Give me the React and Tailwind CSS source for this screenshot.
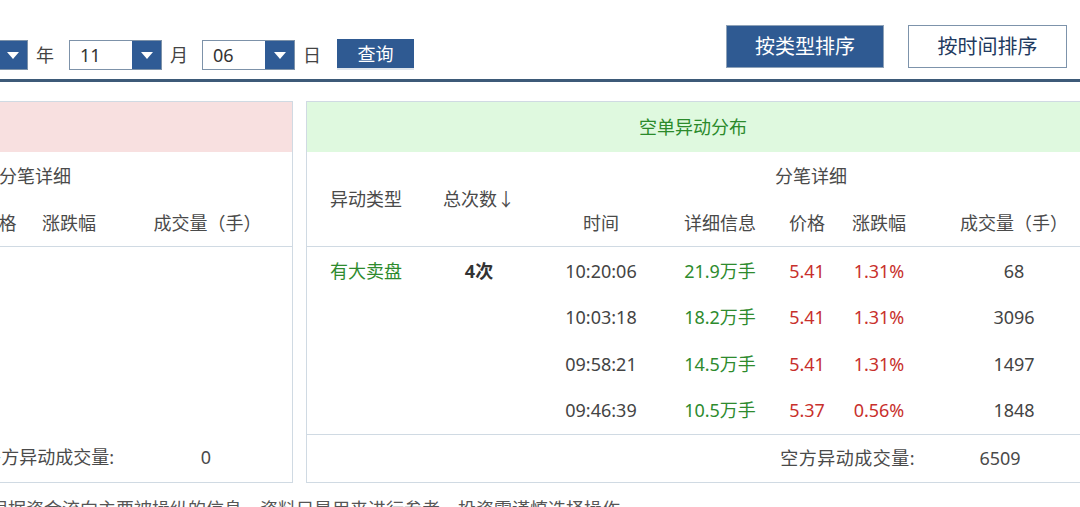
import React from "react";

function Arrow() {
  return (
    <svg width="14" height="9" viewBox="0 0 14 9">
      <polygon points="1,1 13,1 7,8" fill="#ffffff" />
    </svg>
  );
}

function Select({ value, className = "" }) {
  return (
    <div className={`flex h-[30px] border border-[#7d92a9] ${className}`}>
      <div className="w-[62px] bg-white pl-[10px] flex items-center text-[18px] text-[#333] leading-none">{value}</div>
      <div className="w-[29px] bg-[#2f5b95] flex items-center justify-center">
        <Arrow />
      </div>
    </div>
  );
}

const rightCols = "grid grid-cols-[118px_108px_136px_102px_72px_72px_198px]";
const leftCols = "grid grid-cols-[118px_108px_136px_102px_73px_72px_187px]";

const rows = [
  ["10:20:06", "21.9万手", "5.41", "1.31%", "68"],
  ["10:03:18", "18.2万手", "5.41", "1.31%", "3096"],
  ["09:58:21", "14.5万手", "5.41", "1.31%", "1497"],
  ["09:46:39", "10.5万手", "5.37", "0.56%", "1848"],
];

export default function App() {
  return (
    <div className="w-[1080px] h-[507px] overflow-hidden bg-white font-['Noto_Sans','Noto_Sans_CJK_SC',sans-serif] text-[#4a4a4a]">
      {/* top bar */}
      <div className="h-[79px] flex items-start">
        <div className="flex items-center mt-[40px] ml-[-65px] text-[18px] text-[#444]">
          <Select value="2023" />
          <span className="ml-[8px] mr-[15px] leading-none">年</span>
          <Select value="11" />
          <span className="ml-[8px] mr-[14px] leading-none">月</span>
          <Select value="06" />
          <span className="ml-[8px] mr-[16px] leading-none">日</span>
          <button className="w-[77px] h-[31px] mt-[-1px] bg-[#2f5a92] text-white text-[18px] leading-none border-b-2 border-b-[#dfe5ec]">
            查询
          </button>
        </div>
        <div className="ml-auto mr-[13px] mt-[25px] flex gap-[24px]">
          <button className="w-[158px] h-[43px] bg-[#2f5a92] border border-[#8ea2b8] text-white text-[20px] leading-none">
            按类型排序
          </button>
          <button className="w-[159px] h-[43px] bg-white border border-[#7d93ab] text-[#1f3a60] text-[20px] leading-none">
            按时间排序
          </button>
        </div>
      </div>
      <div className="h-[3px] bg-[#3d5a78]" />

      {/* panels */}
      <div className="flex gap-[13px] ml-[-503px] mt-[19px] text-[18px]">
        {/* left panel */}
        <div className="w-[796px] shrink-0 border border-[#d0dae3]">
          <div className="h-[50px] bg-[#f8e0e0] flex items-center justify-center text-[#c03a3a]">多单异动分布</div>
          <div className={`${leftCols} grid-rows-[48px_46px] border-b border-[#d0dae3]`}>
            <div className="row-span-2 flex items-center justify-center">异动类型</div>
            <div className="row-span-2 flex items-center justify-center">总次数↓</div>
            <div className="col-span-5 flex items-center justify-center pl-[52px]">分笔详细</div>
            <div className="flex items-center justify-center">时间</div>
            <div className="flex items-center justify-center">详细信息</div>
            <div className="flex items-center justify-center">价格</div>
            <div className="flex items-center justify-center pr-[4px]">涨跌幅</div>
            <div className="flex items-center justify-center pl-[14px]">成交量（手）</div>
          </div>
          <div className="h-[187px]" />
          <div className="h-[47px] flex items-center">
            <div className="flex-1" />
            <span>多方异动成交量:</span>
            <span className="w-[178px] pl-[6px] text-center">0</span>
          </div>
        </div>

        {/* right panel */}
        <div className="w-[806px] shrink-0 border border-[#d0dae3]">
          <div className="h-[50px] bg-[#dff9df] flex items-center justify-center pr-[32px] text-[#2b8a2b]">空单异动分布</div>
          <div className={`${rightCols} grid-rows-[48px_46px] border-b border-[#d0dae3]`}>
            <div className="row-span-2 flex items-center justify-center">异动类型</div>
            <div className="row-span-2 flex items-center justify-center">总次数↓</div>
            <div className="col-span-5 flex items-center justify-center pr-[24px]">分笔详细</div>
            <div className="flex items-center justify-center">时间</div>
            <div className="flex items-center justify-center">详细信息</div>
            <div className="flex items-center justify-center">价格</div>
            <div className="flex items-center justify-center">涨跌幅</div>
            <div className="flex items-center justify-center">成交量（手）</div>
          </div>
          <div className="pt-[1px] border-b border-[#d0dae3]">
            {rows.map((r, i) => (
              <div key={i} className={`${rightCols} h-[46.5px] items-center text-center`}>
                <div className="text-[#2e8b2e]">{i === 0 ? "有大卖盘" : ""}</div>
                <div className="font-bold text-[#333]">{i === 0 ? "4次" : ""}</div>
                <div className="text-[#444]">{r[0]}</div>
                <div className="text-[#2e8b2e]">{r[1]}</div>
                <div className="text-[#c8302c]">{r[2]}</div>
                <div className="text-[#c8302c]">{r[3]}</div>
                <div className="text-[#444]">{r[4]}</div>
              </div>
            ))}
          </div>
          <div className="h-[47px] flex items-center">
            <div className="flex-1" />
            <span className="tracking-[0.5px]">空方异动成交量:</span>
            <span className="w-[170px] text-center">6509</span>
            <span className="w-[26px]" />
          </div>
        </div>
      </div>

      <p className="mt-[14px] ml-[-10px] text-[18px] leading-[24px] text-[#555] whitespace-nowrap">
        根据资金流向主要被操纵的信息，资料只是用来进行参考，投资需谨慎选择操作
      </p>
    </div>
  );
}
